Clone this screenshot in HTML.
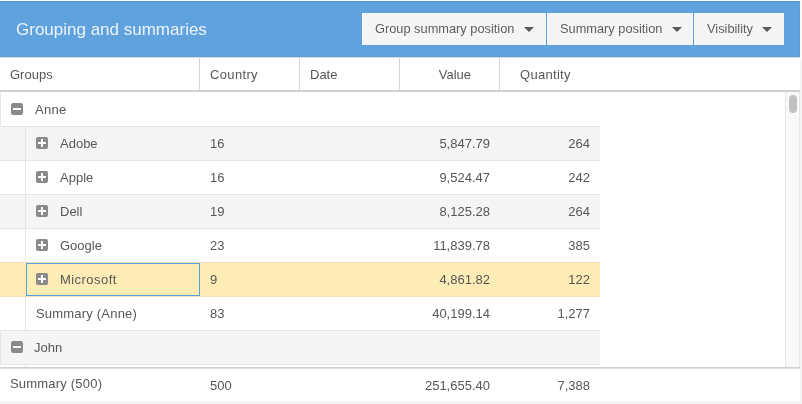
<!DOCTYPE html>
<html><head><meta charset="utf-8">
<style>
*{box-sizing:border-box;margin:0;padding:0}
body{will-change:transform}
html,body{width:802px;height:404px;overflow:hidden;background:#f5f5f5;font-family:"Liberation Sans",sans-serif;color:#575757;font-size:13px}
.a{position:absolute}
#top{left:0;top:0;width:802px;height:1px;background:#fdfcfa}
#rside{left:800px;top:0;width:2px;height:60px;background:#fbfaf8}
#w{left:0;top:1px;width:800px;height:400px;background:#fff}
#hdr{left:0;top:1px;width:800px;height:56px;background:#5fa2dd;border-top:1px solid #5299da;border-bottom:1px solid #579ddb;border-right:1px solid #589edb}
#hline{left:0;top:57px;width:800px;height:1px;background:#dddbd8}
#title{left:16px;top:19px;font-size:17px;color:#ecf3fa;white-space:nowrap;line-height:22px}
.btn{top:13px;height:32px;background:#f5f5f5;color:#5e5e5e;font-size:12.8px;line-height:32px;white-space:nowrap}
.btn span{position:absolute;top:0}
.arr{position:absolute;top:14px;width:0;height:0;border-left:5px solid transparent;border-right:5px solid transparent;border-top:5px solid #5a5a5a}
.ch{top:59px;height:32px;line-height:32px;white-space:nowrap}
.vs{top:58px;width:1px;height:32px;background:#d4d4d4}
#hb{left:0;top:90px;width:800px;height:2px;background:#d0d0d0}
.row{left:0;width:600px;height:34px;border-bottom:1px solid #e6e6e6}
.g{background:#f5f5f5}
.t{position:absolute;top:0;line-height:33px;white-space:nowrap}
.r{text-align:right}
.ind{position:absolute;left:25px;top:0;width:1px;height:34px;background:#e6e6e6}
.ic{position:absolute;width:12px;height:12px;border-radius:2px;background:#8a8a8a}
.ic:before{content:"";position:absolute;left:2px;top:5px;width:8px;height:2px;background:#fff}
.ic.p:after{content:"";position:absolute;left:5px;top:2px;width:2px;height:8px;background:#fff}
</style></head><body>
<div class="a" id="top"></div>
<div class="a" id="rside"></div>
<div class="a" id="w"></div>
<div class="a" id="hdr"></div>
<div class="a" id="hline"></div>
<div class="a" id="title">Grouping and summaries</div>

<div class="a btn" style="left:362px;width:184px"><span style="left:13px">Group summary position</span><i class="arr" style="left:162px"></i></div>
<div class="a btn" style="left:547px;width:146px"><span style="left:13px">Summary position</span><i class="arr" style="left:125px"></i></div>
<div class="a btn" style="left:694px;width:90px"><span style="left:13px">Visibility</span><i class="arr" style="left:68px"></i></div>

<div class="a ch" style="left:10px">Groups</div>
<div class="a vs" style="left:199px"></div>
<div class="a ch" style="left:210px;letter-spacing:0.35px">Country</div>
<div class="a vs" style="left:299px"></div>
<div class="a ch" style="left:310px">Date</div>
<div class="a vs" style="left:399px"></div>
<div class="a ch" style="left:400px;width:71px;text-align:right">Value</div>
<div class="a vs" style="left:499px"></div>
<div class="a ch" style="left:520px;letter-spacing:0.3px">Quantity</div>
<div class="a" id="hb"></div>

<!-- Anne group row -->
<i class="a" style="left:0;top:93px;width:1px;height:33px;background:#e6e6e6"></i><div class="a row" style="top:92px;height:35px">
  <i class="ic" style="left:11px;top:11px"></i><span class="t" style="left:35px;top:1px;letter-spacing:0.3px">Anne</span>
</div>
<div class="a row g" style="top:127px"><i class="ind"></i><i class="ic p" style="left:36px;top:10px"></i><span class="t" style="left:60px">Adobe</span><span class="t" style="left:210px">16</span><span class="t r" style="left:400px;width:90px">5,847.79</span><span class="t r" style="left:500px;width:90px">264</span></div>
<div class="a row" style="top:161px"><i class="ind"></i><i class="ic p" style="left:36px;top:10px"></i><span class="t" style="left:60px">Apple</span><span class="t" style="left:210px">16</span><span class="t r" style="left:400px;width:90px">9,524.47</span><span class="t r" style="left:500px;width:90px">242</span></div>
<div class="a row g" style="top:195px"><i class="ind"></i><i class="ic p" style="left:36px;top:10px"></i><span class="t" style="left:60px">Dell</span><span class="t" style="left:210px">19</span><span class="t r" style="left:400px;width:90px">8,125.28</span><span class="t r" style="left:500px;width:90px">264</span></div>
<div class="a row" style="top:229px;border-bottom-color:#f0e2b6"><i class="ind"></i><i class="ic p" style="left:36px;top:10px"></i><span class="t" style="left:60px">Google</span><span class="t" style="left:210px">23</span><span class="t r" style="left:400px;width:90px">11,839.78</span><span class="t r" style="left:500px;width:90px">385</span></div>
<div class="a row" style="top:263px;background:#fdecb6;border-bottom-color:#f0e2b6"><i class="ic p" style="left:36px;top:10px"></i><span class="t" style="left:60px;letter-spacing:0.45px">Microsoft</span><span class="t" style="left:210px">9</span><span class="t r" style="left:400px;width:90px">4,861.82</span><span class="t r" style="left:500px;width:90px">122</span>
  <i class="a" style="left:26px;top:0;width:174px;height:33px;border:1px solid #5a9ddb"></i></div>
<div class="a row" style="top:297px"><i class="ind"></i><span class="t" style="left:36px;letter-spacing:0.2px">Summary (Anne)</span><span class="t" style="left:210px">83</span><span class="t r" style="left:400px;width:90px">40,199.14</span><span class="t r" style="left:500px;width:90px">1,277</span></div>
<div class="a row g" style="top:331px;border-left:1px solid #e6e6e6"><i class="ic" style="left:10px;top:10px"></i><span class="t" style="left:33px">John</span></div>
<i class="a" style="left:25px;top:365px;width:1px;height:2px;background:#e6e6e6"></i>

<!-- scrollbar -->
<div class="a" style="left:785px;top:92px;width:15px;height:275px;background:#f9f9f9;border-left:1px solid #e8e8e8;border-right:1px solid #e8e8e8"></div>
<div class="a" style="left:789px;top:95px;width:8px;height:18px;border-radius:4px;background:#c1c1c1"></div>

<!-- footer -->
<div class="a" style="left:0;top:367px;width:800px;height:1px;background:#d0d0d0"></div><div class="a" style="left:0;top:368px;width:800px;height:1px;background:#e0e0e0"></div>
<span class="a t" style="left:10px;top:369px;line-height:30px;letter-spacing:0.2px">Summary (500)</span>
<span class="a t" style="left:210px;top:371px;line-height:30px">500</span>
<span class="a t r" style="left:400px;top:371px;width:90px;line-height:30px">251,655.40</span>
<span class="a t r" style="left:500px;top:371px;width:90px;line-height:30px">7,388</span>
</body></html>
